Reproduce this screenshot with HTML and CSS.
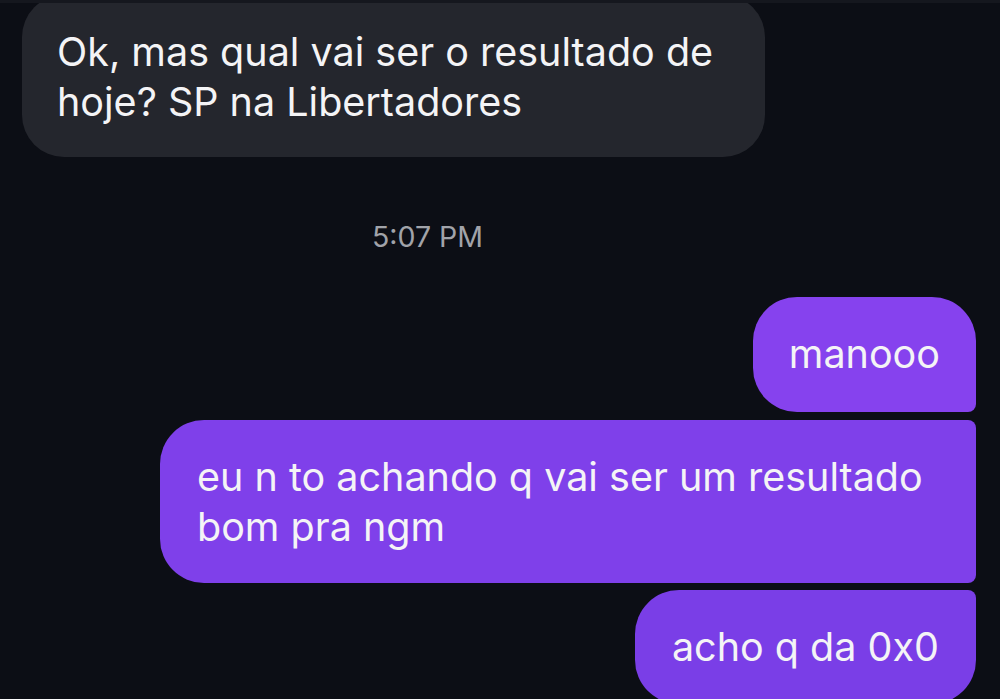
FILE: index.html
```html
<!DOCTYPE html>
<html lang="pt">
<head>
<meta charset="utf-8">
<title>Chat</title>
<link rel="stylesheet" href="styles.css">
</head>
<body>
<div class="strip"></div>
<main class="chat">
  <div class="bubble incoming">Ok, mas qual vai ser o resultado de hoje? SP na Libertadores</div>
  <div class="time">5:07 PM</div>
  <div class="outgoing-group">
    <div class="bubble out first">manooo</div>
    <div class="bubble out middle">eu n to achando q vai ser um resultado bom pra ngm</div>
    <div class="bubble out last">acho q da 0x0</div>
  </div>
</main>
</body>
</html>
```
FILE: styles.css
```css
html, body {
  margin: 0;
  padding: 0;
}
body {
  width: 1000px;
  height: 699px;
  overflow: hidden;
  background: #0c0e15;
  font-family: Inter, "Noto Sans", "Liberation Sans", sans-serif;
  color: #f4f4f6;
}
.strip {
  height: 3px;
  background: #15171e;
}
.chat {
  display: flex;
  flex-direction: column;
  height: 696px;
  overflow: hidden;
}
.bubble {
  font-size: 39.5px;
  line-height: 50px;
  box-sizing: border-box;
}
.incoming {
  margin: -8px 0 0 22px;
  width: 743px;
  padding: 32px 20px 30px 35px;
  background: #24262d;
  border-radius: 42px;
}
.time {
  margin: 64px 0 0 372px;
  font-size: 28.5px;
  line-height: 32px;
  color: #a1a3a9;
}
.outgoing-group {
  margin-top: 44px;
  display: flex;
  flex-direction: column;
  align-items: flex-end;
  gap: 7px;
  padding-right: 24px;
}
.out {
  max-width: 816px;
  padding: 32px 37px 32px 37px;
  background: #7f40ea;
  border-radius: 44px;
}
.out.first {
  margin-bottom: 1px;
  padding: 32px 36px 33px 36px;
  background: #8642ee;
  border-bottom-right-radius: 8px;
}
.out.middle {
  padding: 32px 44px 31px 37px;
  border-top-right-radius: 8px;
  border-bottom-right-radius: 8px;
}
.out.last {
  background: #7a3ee7;
  border-top-right-radius: 8px;
}
```
